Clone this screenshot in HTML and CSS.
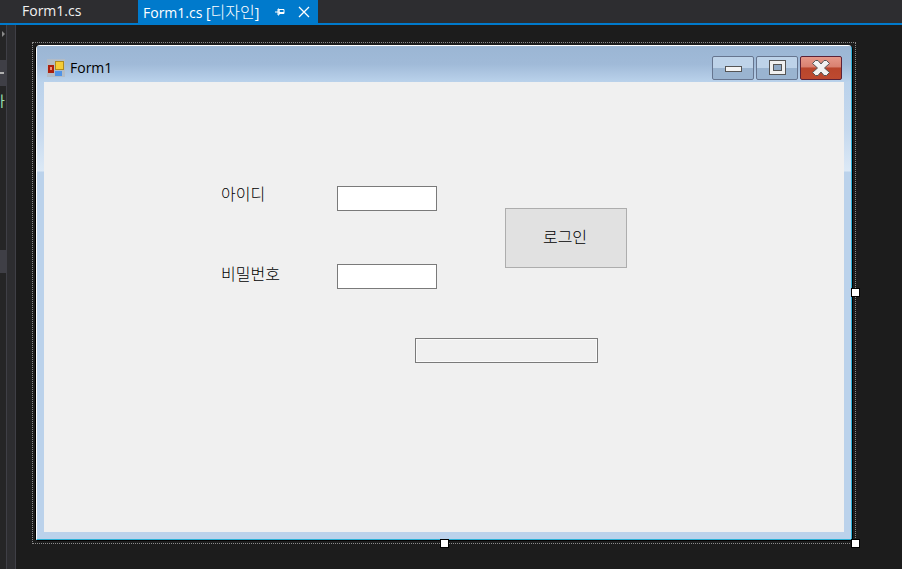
FILE: index.html
```html
<!DOCTYPE html>
<html lang="ko">

<head>
	<meta charset="UTF-8">
	<title>Form1.cs [디자인]</title>
	<link rel="stylesheet" href="styles.css">
</head>

<body>
	<div class="tab-strip">
		<div class="tab">Form1.cs</div>
		<div class="tab active">
			<span class="tab-name">Form1.cs [<span class="tab-hangul">디자인</span>]</span>
			<svg class="tab-icon" width="12" height="12" viewBox="0 0 12 12">
				<path d="M1 6h3M4 3h1v6H4zM5 3.500h5v4H5zM5 6.500h5" fill="none" stroke="#fff" stroke-width="1" />
			</svg>
			<svg class="tab-icon" width="12" height="12" viewBox="0 0 12 12">
				<path d="M1 1l10 10M11 1L1 11" fill="none" stroke="#fff" stroke-width="1.300" />
			</svg>
		</div>
	</div>

	<div class="workspace">
		<div class="side-rail">
			<div class="rail-arrow"></div>
			<div class="rail-btn rail-first">
				<div class="rail-tick"></div>
			</div>
			<div class="rail-text">가</div>
			<div class="rail-btn rail-second"></div>
		</div>
		<div class="rail-gap"></div>

		<div class="designer">
			<div class="selection"></div>

			<div class="form-window">
				<div class="title-bar">
					<svg class="form-icon" width="18" height="18" viewBox="0 0 18 18">
						<rect width="18" height="18" fill="#b3bcc6" />
						<rect x="1" y="6" width="6" height="8" fill="#ad1f0c" />
						<rect x="3" y="8" width="2" height="3" fill="#ef8f7d" />
						<rect x="8.500" y="2.500" width="8" height="8" fill="#f5cc37" stroke="#b08a1c" />
						<rect x="8" y="12" width="7" height="5" fill="#4f93e6" />
					</svg>
					<span class="form-title">Form1</span>
					<div class="caption-buttons">
						<div class="caption-btn">
							<div class="glyph-min"></div>
						</div>
						<div class="caption-btn">
							<div class="glyph-max"></div>
						</div>
						<div class="caption-btn close">
							<svg width="18" height="16" viewBox="0 0 18 16">
								<path d="M.5 3.500L3.500.5H6L9 4l3-3.500h2.500l3 3L12.500 8l5 4.500-3 3H12L9 12l-3 3.500H3.500l-3-3L5.500 8z" fill="#f2f2f2" stroke="#555" stroke-width="1" />
							</svg>
						</div>
					</div>
				</div>

				<div class="form-body">
					<div class="frame-side left"></div>
					<div class="client">
						<label class="field-label id-label">아이디</label>
						<input class="text-box id-box" type="text">
						<label class="field-label pw-label">비밀번호</label>
						<input class="text-box pw-box" type="text">
						<button class="login-btn">로그인</button>
						<div class="progress"></div>
					</div>
					<div class="frame-side right"></div>
				</div>
				<div class="frame-bottom"></div>
			</div>

			<div class="handle handle-right"></div>
			<div class="handle handle-bottom"></div>
			<div class="handle handle-corner"></div>
		</div>
	</div>
</body>

</html>
```

FILE: styles.css
```css
:root {
	--ide-dark: #1c1c1c;
	--ide-chrome: #2d2d30;
	--ide-blue: #007acc;
	--frame: #bbd2eb;
	--client: #f0f0f0;
}

* {
	margin: 0;
	padding: 0;
	box-sizing: border-box;
}

html,
body {
	height: 100%;
	overflow: hidden;
}

body {
	background-color: var(--ide-dark);
	font-family: "Open Sans", "Noto Sans CJK KR", sans-serif;
	display: flex;
	flex-direction: column;
}

.tab-strip {
	height: 25px;
	flex-shrink: 0;
	display: flex;
	padding-left: 16px;
	background-color: var(--ide-chrome);
	border-bottom: 2px solid var(--ide-blue);
}

.tab {
	width: 122px;
	height: 23px;
	padding-left: 6px;
	color: #f1f1f1;
	font-size: 14px;
	line-height: 22px;
}

.tab.active {
	width: 180px;
	padding-left: 5px;
	background-color: var(--ide-blue);
	color: #fff;
	display: flex;
	align-items: center;
}

.tab-name {
	width: 131px;
	flex-shrink: 0;
	white-space: nowrap;
}

.tab-hangul {
	font-family: "Noto Sans CJK KR", sans-serif;
	font-size: 16px;
	font-weight: 300;
}

.tab-icon {
	margin-right: 12px;
	flex-shrink: 0;
}

.workspace {
	flex: 1;
	display: flex;
}

.side-rail {
	width: 6px;
	background-color: #252526;
	position: relative;
	overflow: hidden;
}

.rail-arrow {
	position: absolute;
	top: 6px;
	left: 2px;
	border-left: 3px solid #8a8a8a;
	border-top: 3px solid transparent;
	border-bottom: 3px solid transparent;
}

.rail-btn {
	position: absolute;
	left: 0;
	width: 6px;
	background-color: #3f3f46;
}

.rail-first {
	top: 35px;
	height: 26px;
}

.rail-tick {
	width: 4px;
	height: 2px;
	margin-top: 12px;
	background-color: #b0b0b0;
}

.rail-second {
	top: 225px;
	height: 23px;
}

.rail-text {
	position: absolute;
	top: 65px;
	left: -8px;
	color: #9ce0b0;
	font-size: 14px;
}

.rail-gap {
	width: 10px;
	background-color: var(--ide-chrome);
	border-left: 1px solid #3f3f46;
	border-right: 1px solid #3f3f46;
}

.designer {
	flex: 1;
	position: relative;
}

/* dotted selection frame, offsets are from the designer corner */
.selection {
	position: absolute;
	left: 16px;
	top: 17px;
	width: 824px;
	height: 502px;
	border: 1px dotted #8a8a8a;
}

.handle {
	position: absolute;
	width: 9px;
	height: 9px;
	background-color: #fff;
	border: 1px solid #000;
}

.handle-right {
	left: 835px;
	top: 263px;
}

.handle-bottom {
	left: 424px;
	top: 514px;
}

.handle-corner {
	left: 835px;
	top: 514px;
}

.form-window {
	position: absolute;
	left: 20px;
	top: 20px;
	width: 816px;
	height: 495px;
	display: flex;
	flex-direction: column;
	border-top: 1px solid #fff;
	border-left: 1px solid #fff;
	border-right: 1px solid #2bb0d6;
	border-bottom: 1px solid #2bb0d6;
	border-top-left-radius: 4px;
	border-top-right-radius: 4px;
	box-shadow: -1px 0 0 #000, 1px 1px 0 #000;
}

.title-bar {
	height: 36px;
	flex-shrink: 0;
	display: flex;
	align-items: center;
	padding-left: 10px;
	background: linear-gradient(to bottom, #9bb6d4, #a0bad8 50%, #bad2eb);
}

.form-icon {
	flex-shrink: 0;
	margin-top: 7px;
}

.form-title {
	margin-left: 5px;
	margin-top: 6px;
	color: #000;
	font-size: 14px;
}

.caption-buttons {
	margin-left: auto;
	margin-right: 9px;
	display: flex;
	gap: 2px;
	margin-top: 7px;
}

.caption-btn {
	width: 42px;
	height: 24px;
	display: flex;
	align-items: center;
	justify-content: center;
	border: 1px solid #66758f;
	border-radius: 2px;
	background: linear-gradient(to bottom, #bed3e9 50%, #9ab4d0 50%);
}

.caption-btn.close {
	border-color: #5c2237;
	background: linear-gradient(to bottom, #e6988a, #d98170 45%, #b9452c 50%, #bd4a30);
}

.glyph-min {
	width: 17px;
	height: 6px;
	margin-top: 2px;
	background-color: #f4f4f4;
	border: 1px solid #555;
}

.glyph-max {
	width: 15px;
	height: 13px;
	background-color: #8fa9c6;
	border: 3px solid #f0f0f0;
	box-shadow: 0 0 0 1px #555, inset 0 0 0 1px #555;
}

.form-body {
	flex: 1;
	display: flex;
}

.frame-side {
	flex: 0 0 7px;
	background: linear-gradient(to bottom, #bbd2eb, #c6d9ee 50px, #dce9f6 89px, var(--frame) 90px);
}

.client {
	flex: 1;
	position: relative;
	background-color: var(--client);
}

.frame-bottom {
	height: 7px;
	flex-shrink: 0;
	background-color: var(--frame);
}

/* controls sit where the form designer dropped them */
.field-label {
	position: absolute;
	left: 177px;
	color: #000;
	font-family: "Noto Sans CJK KR", sans-serif;
	font-size: 16px;
	font-weight: 300;
	line-height: 20px;
}

.id-label {
	top: 101px;
}

.pw-label {
	top: 181px;
}

.text-box {
	position: absolute;
	left: 293px;
	width: 100px;
	height: 25px;
	background-color: #fff;
	border: 1px solid #7a7a7a;
}

.id-box {
	top: 104px;
}

.pw-box {
	top: 182px;
}

.login-btn {
	position: absolute;
	left: 461px;
	top: 126px;
	width: 122px;
	height: 60px;
	padding: 0 2px 4px 0;
	background-color: #e1e1e1;
	border: 1px solid #adadad;
	color: #000;
	font-family: "Noto Sans CJK KR", sans-serif;
	font-size: 16px;
	font-weight: 300;
}

.progress {
	position: absolute;
	left: 371px;
	top: 256px;
	width: 183px;
	height: 25px;
	background-color: #f0f0f0;
	border: 1px solid #7a7a7a;
	box-shadow: inset 0 0 0 1px #fafafa;
}
```
